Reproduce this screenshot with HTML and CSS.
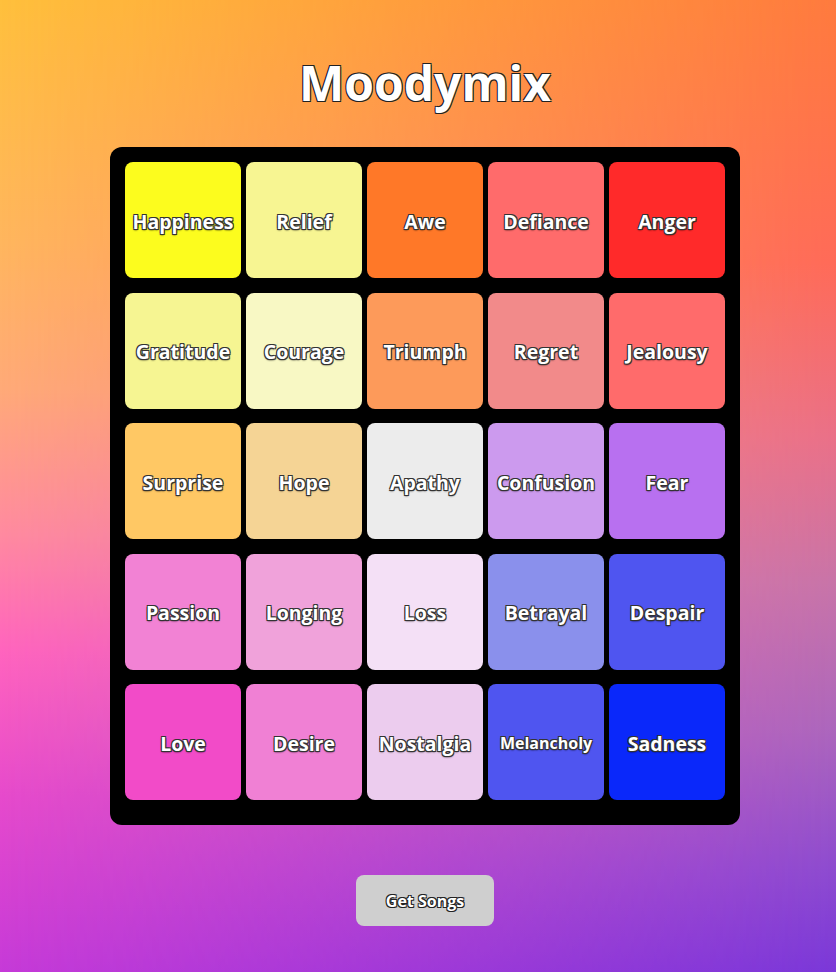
FILE: index.html
```html
<!DOCTYPE html>
<html lang="en">
<head>
<meta charset="utf-8">
<title>Moodymix</title>
<link rel="stylesheet" href="styles.css">
</head>
<body>
<div class="bg-right"></div>
<main class="page">
  <h1 class="title">Moodymix</h1>
  <section class="board">
    <div class="cell c-happiness">Happiness</div>
    <div class="cell c-relief">Relief</div>
    <div class="cell c-awe">Awe</div>
    <div class="cell c-defiance">Defiance</div>
    <div class="cell c-anger">Anger</div>

    <div class="cell c-gratitude">Gratitude</div>
    <div class="cell c-courage">Courage</div>
    <div class="cell c-triumph">Triumph</div>
    <div class="cell c-regret">Regret</div>
    <div class="cell c-jealousy">Jealousy</div>

    <div class="cell c-surprise">Surprise</div>
    <div class="cell c-hope">Hope</div>
    <div class="cell c-apathy">Apathy</div>
    <div class="cell c-confusion">Confusion</div>
    <div class="cell c-fear">Fear</div>

    <div class="cell c-passion">Passion</div>
    <div class="cell c-longing">Longing</div>
    <div class="cell c-loss">Loss</div>
    <div class="cell c-betrayal">Betrayal</div>
    <div class="cell c-despair">Despair</div>

    <div class="cell c-love">Love</div>
    <div class="cell c-desire">Desire</div>
    <div class="cell c-nostalgia">Nostalgia</div>
    <div class="cell c-melancholy small">Melancholy</div>
    <div class="cell c-sadness">Sadness</div>
  </section>
  <button class="get-songs" type="button">Get Songs</button>
</main>
</body>
</html>
```

FILE: styles.css
```css
html, body {
  margin: 0;
  padding: 0;
  height: 100%;
}

body {
  font-family: "Open Sans", "Liberation Sans", sans-serif;
  min-height: 972px;
  position: relative;
  overflow: hidden;
  background: linear-gradient(to bottom,
    #ffc03c 0%,
    #ffb65e 25%,
    #ffaa78 40%,
    #ff8aa0 55%,
    #ff64be 67%,
    #e64acc 82%,
    #c63ad8 100%);
}

.bg-right {
  position: absolute;
  inset: 0;
  background: linear-gradient(to bottom,
    #ff7a3e 0%,
    #ff6a58 27%,
    #ea7088 45%,
    #c874a8 60%,
    #ac66bc 75%,
    #8c4ad0 90%,
    #7a38d8 100%);
  -webkit-mask-image: linear-gradient(to right, transparent 0%, black 100%);
  mask-image: linear-gradient(to right, transparent 0%, black 100%);
}

.page {
  position: relative;
  display: flex;
  flex-direction: column;
  align-items: center;
  padding: 50px 0 0 14px;
}

.title {
  margin: 0;
  font-size: 48px;
  font-weight: 700;
  line-height: 65px;
  color: #fff;
  text-shadow: -1px -1px 0 #222, 1px -1px 0 #222, -1px 1px 0 #222, 1px 1px 0 #222;
}

.board {
  margin-top: 32px;
  background: #000;
  border-radius: 12px;
  padding: 15px 15px 25px;
  display: grid;
  grid-template-columns: repeat(5, 116px);
  grid-auto-rows: 116px;
  column-gap: 5px;
  row-gap: 14.5px;
}

.cell {
  border-radius: 8px;
  display: flex;
  align-items: center;
  justify-content: center;
  padding-top: 2px;
  box-sizing: border-box;
  color: #fff;
  font-size: 19.5px;
  font-weight: 700;
  text-shadow: -1px -1px 0 #333, 1px -1px 0 #333, -1px 1px 0 #333, 1px 1px 0 #333, 0 1px 2px #000;
}

.cell.small {
  font-size: 16px;
}

.c-happiness { background: #fcfc1e; }
.c-relief { background: #f7f592; }
.c-awe { background: #ff7828; }
.c-defiance { background: #ff6b6b; }
.c-anger { background: #ff2a2a; }

.c-gratitude { background: #f6f592; }
.c-courage { background: #f8f8c4; }
.c-triumph { background: #fd9a5a; }
.c-regret { background: #f28a8a; }
.c-jealousy { background: #ff6b6b; }

.c-surprise { background: #ffc864; }
.c-hope { background: #f5d495; }
.c-apathy { background: #ececec; }
.c-confusion { background: #cc9aee; }
.c-fear { background: #b870f0; }

.c-passion { background: #f282d4; }
.c-longing { background: #f0a2da; }
.c-loss { background: #f4e0f6; }
.c-betrayal { background: #8a90ec; }
.c-despair { background: #4f55f0; }

.c-love { background: #f24bc8; }
.c-desire { background: #f080d4; }
.c-nostalgia { background: #ecccee; }
.c-melancholy { background: #4f55f0; }
.c-sadness { background: #0a28fa; }

.get-songs {
  margin-top: 50px;
  width: 138px;
  height: 51px;
  border: none;
  border-radius: 8px;
  background: #cfcfcf;
  font-family: "Open Sans", "Liberation Sans", sans-serif;
  font-size: 16px;
  font-weight: 700;
  color: #fff;
  text-shadow: -1px -1px 0 #222, 1px -1px 0 #222, -1px 1px 0 #222, 1px 1px 0 #222;
  cursor: pointer;
}
```
